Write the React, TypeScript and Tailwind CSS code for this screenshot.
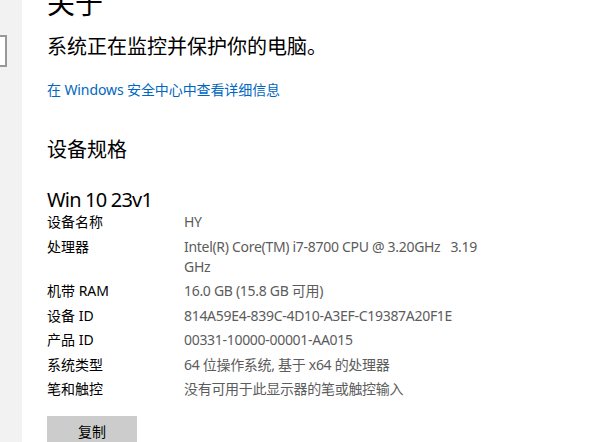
const specs = [
  { label: "设备名称", value: "HY" },
  { label: "处理器", value: "Intel(R) Core(TM) i7-8700 CPU @ 3.20GHz   3.19 GHz" },
  { label: "机带 RAM", value: "16.0 GB (15.8 GB 可用)" },
  { label: "设备 ID", value: "814A59E4-839C-4D10-A3EF-C19387A20F1E" },
  { label: "产品 ID", value: "00331-10000-00001-AA015" },
  { label: "系统类型", value: "64 位操作系统, 基于 x64 的处理器" },
  { label: "笔和触控", value: "没有可用于此显示器的笔或触控输入" },
];

export default function App() {
  return (
    <div
      className="flex w-[608px] h-[442px] overflow-hidden bg-white text-black"
      style={{ fontFamily: '"Noto Sans", "Noto Sans CJK SC", sans-serif' }}
    >
      {/* sidebar, mostly scrolled away */}
      <div className="w-[22px] shrink-0 bg-[#f2f2f2] pt-[35px]">
        <div className="w-[7px] h-[32px] bg-white border-2 border-l-0 border-[#999999]" />
      </div>

      <div className="flex-1 pl-[25px] -mt-[17px]">
        <h1 className="text-[28px] leading-[40px]">关于</h1>
        <p className="mt-[10px] text-[20px] leading-[28px]">系统正在监控并保护你的电脑。</p>
        <a className="block mt-[19px] text-[14px] leading-[20px] text-[#0067c0] tracking-[-0.1px]">
          在 Windows 安全中心中查看详细信息
        </a>

        <h2 className="mt-[36px] text-[20px] leading-[28px]">设备规格</h2>
        <div className="mt-[24px] text-[20px] leading-[24px] tracking-[-0.8px]">Win 10 23v1</div>

        <div className="flex flex-col gap-[4.5px] text-[14px] leading-[20px]">
          {specs.map((s) => (
            <div key={s.label} className="flex">
              <div className="w-[137px] shrink-0">{s.label}</div>
              <div className="w-[305px] text-[#5c5c5c] whitespace-pre-wrap tracking-[-0.3px]">{s.value}</div>
            </div>
          ))}
        </div>

        <button className="mt-[16.5px] w-[90px] h-[32px] bg-[#cccccc] text-[14px]">复制</button>
      </div>
    </div>
  );
}
